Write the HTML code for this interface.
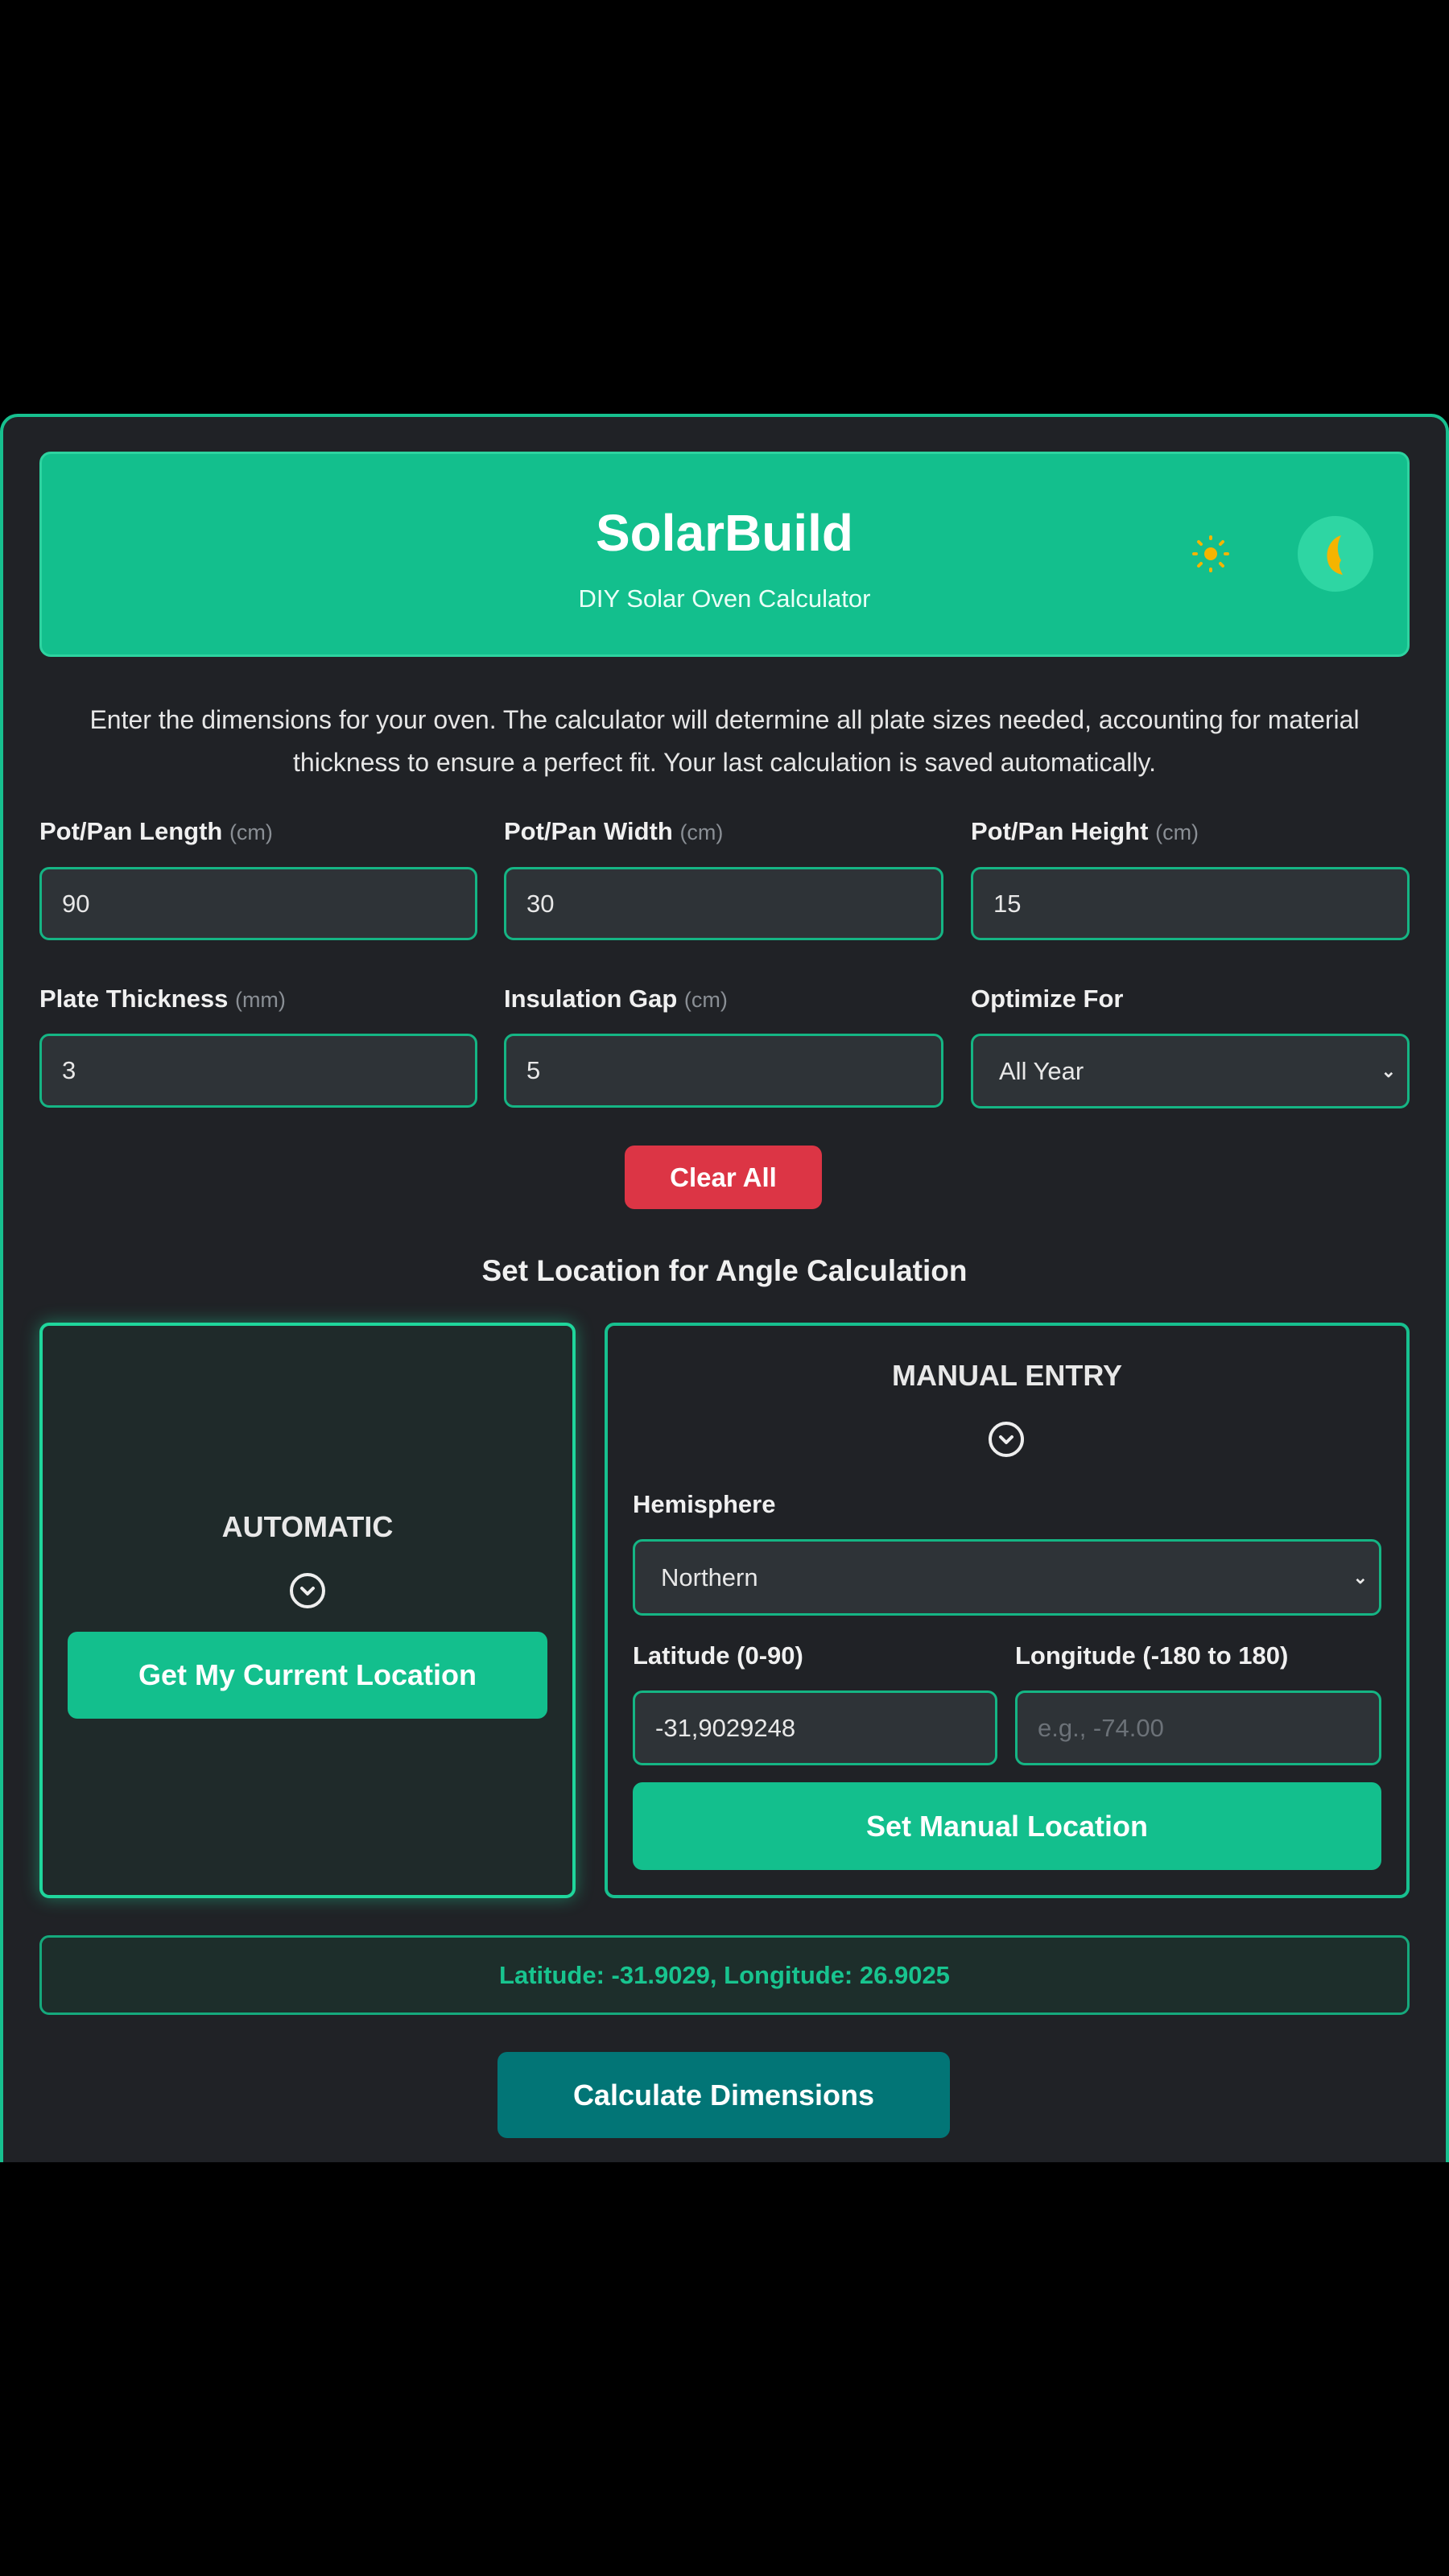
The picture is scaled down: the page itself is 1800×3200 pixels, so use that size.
<!DOCTYPE html>
<html><head><meta charset="utf-8"><style>
*{box-sizing:border-box;margin:0;padding:0}
body{width:1800px;height:3200px;background:#000;position:relative;overflow:hidden;font-family:"Liberation Sans",Arial,sans-serif;color:#e8e8e8}
.a{position:absolute}
.card{left:0;top:514px;width:1800px;height:2172px;background:#202226;border:4px solid #17c08f;border-bottom:none;border-radius:22px 22px 0 0;overflow:hidden}
.hdr{left:49px;top:561px;width:1702px;height:255px;background:#13bf8d;border:3px solid #2ed3a0;border-radius:14px}
.c{text-align:center}
.lbl{font-weight:bold;font-size:31px;color:#f0f0f0}
.lbl span{font-weight:normal;color:#8a8f95;font-size:27px}
.inp{background:#2e3337;border:3px solid #15b584;border-radius:12px;font-size:31px;color:#e8e8e8;padding-left:25px;display:flex;align-items:center}
.btn{border-radius:12px;color:#fff;font-weight:bold;font-size:36px;display:flex;align-items:center;justify-content:center}
.chev{width:46px;height:46px}
</style></head><body>
<div class="a card"></div>
<div class="a hdr"></div>
<div class="a c" style="left:49px;width:1702px;top:625px;font-size:64px;font-weight:bold;color:#fff">SolarBuild</div>
<div class="a c" style="left:49px;width:1702px;top:726px;font-size:31px;color:#eafff7">DIY Solar Oven Calculator</div>
<svg class="a" style="left:1474px;top:658px" width="60" height="60" viewBox="0 0 60 60" fill="#f5b400" stroke="#f5b400" stroke-width="4" stroke-linecap="round"><circle cx="30" cy="30" r="8" stroke="none"/><line x1="30" y1="9" x2="30" y2="11"/><line x1="30" y1="49" x2="30" y2="51"/><line x1="9" y1="30" x2="12" y2="30"/><line x1="48" y1="30" x2="51" y2="30"/><line x1="15" y1="15" x2="18" y2="18"/><line x1="42" y1="42" x2="45" y2="45"/><line x1="15" y1="45" x2="18" y2="42"/><line x1="42" y1="18" x2="45" y2="15"/></svg>
<div class="a" style="left:1612px;top:641px;width:94px;height:94px;border-radius:50%;background:#2ed6a3"></div>
<svg class="a" style="left:1630px;top:660px" width="60" height="60" viewBox="0 0 60 60"><path d="M36 5 C20 10 14 30 22 44 C26 50 32 53 38 54 C34 46 32 42 36 36 C31 28 30 16 36 5Z" fill="#f5b400"/></svg>
<div class="a c" style="left:55px;width:1690px;top:868px;font-size:32px;line-height:53px;color:#e6e6e6">Enter the dimensions for your oven. The calculator will determine all plate sizes needed, accounting for material thickness to ensure a perfect fit. Your last calculation is saved automatically.</div>

<div class="a lbl" style="left:49px;top:1015px">Pot/Pan Length <span>(cm)</span></div>
<div class="a lbl" style="left:626px;top:1015px">Pot/Pan Width <span>(cm)</span></div>
<div class="a lbl" style="left:1206px;top:1015px">Pot/Pan Height <span>(cm)</span></div>
<div class="a inp" style="left:49px;top:1077px;width:544px;height:91px">90</div>
<div class="a inp" style="left:626px;top:1077px;width:546px;height:91px">30</div>
<div class="a inp" style="left:1206px;top:1077px;width:545px;height:91px">15</div>

<div class="a lbl" style="left:49px;top:1223px">Plate Thickness <span>(mm)</span></div>
<div class="a lbl" style="left:626px;top:1223px">Insulation Gap <span>(cm)</span></div>
<div class="a lbl" style="left:1206px;top:1223px">Optimize For</div>
<div class="a inp" style="left:49px;top:1284px;width:544px;height:92px">3</div>
<div class="a inp" style="left:626px;top:1284px;width:546px;height:92px">5</div>
<div class="a inp" style="left:1206px;top:1284px;width:545px;height:93px;padding-left:32px">All Year<span style="position:absolute;right:14px;font-size:22px;font-weight:bold">&#8964;</span></div>

<div class="a btn" style="left:776px;top:1423px;width:245px;height:79px;background:#dc3545;font-size:33px">Clear All</div>
<div class="a c" style="left:0;width:1800px;top:1558px;font-size:37px;font-weight:bold;color:#f0f0f0">Set Location for Angle Calculation</div>

<div class="a" style="left:49px;top:1643px;width:666px;height:715px;background:#1f2a2a;border:4px solid #1fd69c;border-radius:12px;box-shadow:0 0 22px rgba(31,214,156,.45)"></div>
<div class="a c" style="left:49px;width:666px;top:1876px;font-size:36px;font-weight:bold">AUTOMATIC</div>
<svg class="a chev" style="left:359px;top:1953px" viewBox="0 0 46 46" fill="none" stroke="#eee" stroke-width="4"><circle cx="23" cy="23" r="20"/><path d="M16 20 L23 27 L30 20" stroke-linecap="round" stroke-linejoin="round"/></svg>
<div class="a btn" style="left:84px;top:2027px;width:596px;height:108px;background:#13bf8d">Get My Current Location</div>

<div class="a" style="left:751px;top:1643px;width:1000px;height:715px;background:#202226;border:4px solid #17c08f;border-radius:12px"></div>
<div class="a c" style="left:751px;width:1000px;top:1688px;font-size:36px;font-weight:bold">MANUAL ENTRY</div>
<svg class="a chev" style="left:1227px;top:1765px" viewBox="0 0 46 46" fill="none" stroke="#eee" stroke-width="4"><circle cx="23" cy="23" r="20"/><path d="M16 20 L23 27 L30 20" stroke-linecap="round" stroke-linejoin="round"/></svg>
<div class="a lbl" style="left:786px;top:1851px">Hemisphere</div>
<div class="a inp" style="left:786px;top:1912px;width:930px;height:95px;padding-left:32px">Northern<span style="position:absolute;right:14px;font-size:22px;font-weight:bold">&#8964;</span></div>
<div class="a lbl" style="left:786px;top:2039px">Latitude (0-90)</div>
<div class="a lbl" style="left:1261px;top:2039px">Longitude (-180 to 180)</div>
<div class="a inp" style="left:786px;top:2100px;width:453px;height:93px">-31,9029248</div>
<div class="a inp" style="left:1261px;top:2100px;width:455px;height:93px;color:#6c7278">e.g., -74.00</div>
<div class="a btn" style="left:786px;top:2214px;width:930px;height:109px;background:#13bf8d">Set Manual Location</div>

<div class="a" style="left:49px;top:2404px;width:1702px;height:99px;background:#1d2e2b;border:3px solid #15a97c;border-radius:12px"></div>
<div class="a c" style="left:49px;width:1702px;top:2436px;font-size:31px;font-weight:bold;color:#18c48f">Latitude: -31.9029, Longitude: 26.9025</div>
<div class="a btn" style="left:618px;top:2549px;width:562px;height:107px;background:#027576">Calculate Dimensions</div>
</body></html>
